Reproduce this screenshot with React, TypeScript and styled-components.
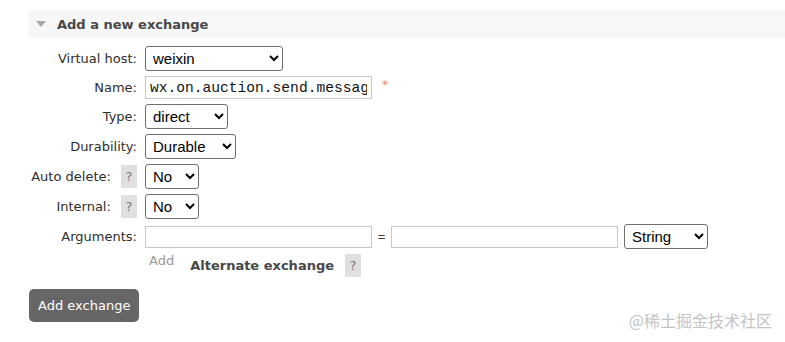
import React from 'react';
import styled, { createGlobalStyle } from 'styled-components';

const GlobalStyle = createGlobalStyle`
  html, body {
    margin: 0;
    padding: 0;
    background: #fff;
  }
  body {
    font-family: 'DejaVu Sans', Verdana, sans-serif;
    font-size: 13px;
    color: #484848;
  }
`;

export default function App() {
  return (
    <Page>
      <GlobalStyle />
      <SectionHeader>
        <Caret />
        <SectionTitle>Add a new exchange</SectionTitle>
      </SectionHeader>

      <Form>
        <Label>Virtual host:</Label>
        <Field>
          <Select width={138} defaultValue="weixin">
            <option>weixin</option>
          </Select>
        </Field>

        <Label>Name:</Label>
        <Field>
          <TextInput width={227} mono defaultValue="wx.on.auction.send.message" />
          <Required>*</Required>
        </Field>

        <Label>Type:</Label>
        <Field>
          <Select width={83} defaultValue="direct">
            <option>direct</option>
            <option>fanout</option>
            <option>headers</option>
            <option>topic</option>
          </Select>
        </Field>

        <Label>Durability:</Label>
        <Field>
          <Select width={91} defaultValue="Durable">
            <option>Durable</option>
            <option>Transient</option>
          </Select>
        </Field>

        <Label>
          Auto delete: <Help>?</Help>
        </Label>
        <Field>
          <Select width={54} defaultValue="No">
            <option>No</option>
            <option>Yes</option>
          </Select>
        </Field>

        <Label>
          Internal: <Help>?</Help>
        </Label>
        <Field>
          <Select width={54} defaultValue="No">
            <option>No</option>
            <option>Yes</option>
          </Select>
        </Field>

        <Label>Arguments:</Label>
        <Field>
          <TextInput width={227} />
          <Equals>=</Equals>
          <TextInput width={227} />
          <Select width={84} gap={6} defaultValue="String">
            <option>String</option>
            <option>Number</option>
            <option>Boolean</option>
            <option>List</option>
          </Select>
        </Field>

        <span />
        <ExtraRow>
          <AddLink>Add</AddLink>
          <ExtraTitle>Alternate exchange</ExtraTitle>
          <Help>?</Help>
        </ExtraRow>
      </Form>

      <SubmitButton>Add exchange</SubmitButton>

      <Watermark>@稀土掘金技术社区</Watermark>
    </Page>
  );
}

const Page = styled.div`
  position: relative;
  height: 342px;
  box-sizing: border-box;
  padding: 10px 0 0 28px;
  overflow: hidden;
`;

const SectionHeader = styled.div`
  display: flex;
  align-items: center;
  height: 28px;
  padding-left: 8px;
  background: #f7f7f7;
  border-radius: 4px 0 0 4px;
`;

const Caret = styled.span`
  width: 0;
  height: 0;
  border-left: 5px solid transparent;
  border-right: 5px solid transparent;
  border-top: 6px solid #a8a8a8;
  margin-right: 11px;
`;

const SectionTitle = styled.h2`
  margin: 0;
  font-size: 13px;
  font-weight: bold;
  color: #484848;
`;

const Form = styled.div`
  display: grid;
  grid-template-columns: 109px 1fr;
  column-gap: 8px;
  row-gap: 5px;
  margin-top: 8px;
  align-items: center;
`;

const Label = styled.label`
  display: flex;
  justify-content: flex-end;
  align-items: center;
  gap: 6px;
  white-space: pre;
  color: #2e2e2e;
`;

const Field = styled.div`
  display: flex;
  align-items: center;
`;

const Select = styled.select<{ width: number; gap?: number }>`
  width: ${p => p.width}px;
  height: 25px;
  box-sizing: border-box;
  padding: 0 3px;
  margin-left: ${p => p.gap ?? 0}px;
  font-family: 'Liberation Sans', Arial, sans-serif;
  font-size: 15px;
  color: #000;
  background: #fff;
  border: 1px solid #6f6f6f;
  border-radius: 3px;
`;

const TextInput = styled.input<{ width: number; mono?: boolean }>`
  width: ${p => p.width}px;
  height: ${p => (p.mono ? 23 : 22)}px;
  box-sizing: border-box;
  padding: 0 4px;
  border: 1px solid #c8c8c8;
  border-radius: 0;
  font-family: ${p => (p.mono ? "'Liberation Mono', 'Courier New', monospace" : "'Liberation Sans', Arial, sans-serif")};
  font-size: 14.6px;
  color: #111;
  outline: none;
`;

const Required = styled.span`
  align-self: flex-start;
  margin: 2px 0 0 10px;
  color: #f08080;
  font-size: 12px;
`;

const Equals = styled.span`
  width: 19px;
  text-align: center;
  font-family: 'Liberation Sans', Arial, sans-serif;
  font-size: 13px;
  color: #444;
`;

const Help = styled.span`
  display: inline-flex;
  align-items: center;
  justify-content: center;
  width: 16px;
  height: 23px;
  background: #e0e0e0;
  color: #7a7a7a;
  font-size: 13px;
`;

const ExtraRow = styled.div`
  display: flex;
  align-items: flex-start;
  height: 22px;
`;

const AddLink = styled.span`
  margin-left: 4px;
  color: #999;
  line-height: 14px;
`;

const ExtraTitle = styled.span`
  margin: 5px 11px 0 16px;
  font-weight: bold;
  color: #484848;
  line-height: 14px;
`;

const SubmitButton = styled.button`
  display: block;
  margin: 13px 0 0 1px;
  height: 33px;
  padding: 0 9px;
  border: none;
  border-radius: 5px;
  background: #666;
  color: #fff;
  font-family: 'DejaVu Sans', Verdana, sans-serif;
  font-size: 13px;
`;

const Watermark = styled.div`
  position: absolute;
  right: 13px;
  bottom: 10px;
  font-family: 'Noto Sans CJK SC', sans-serif;
  font-size: 16px;
  color: #c4c4c4;
  text-shadow: 0 0 1px #fff;
`;
